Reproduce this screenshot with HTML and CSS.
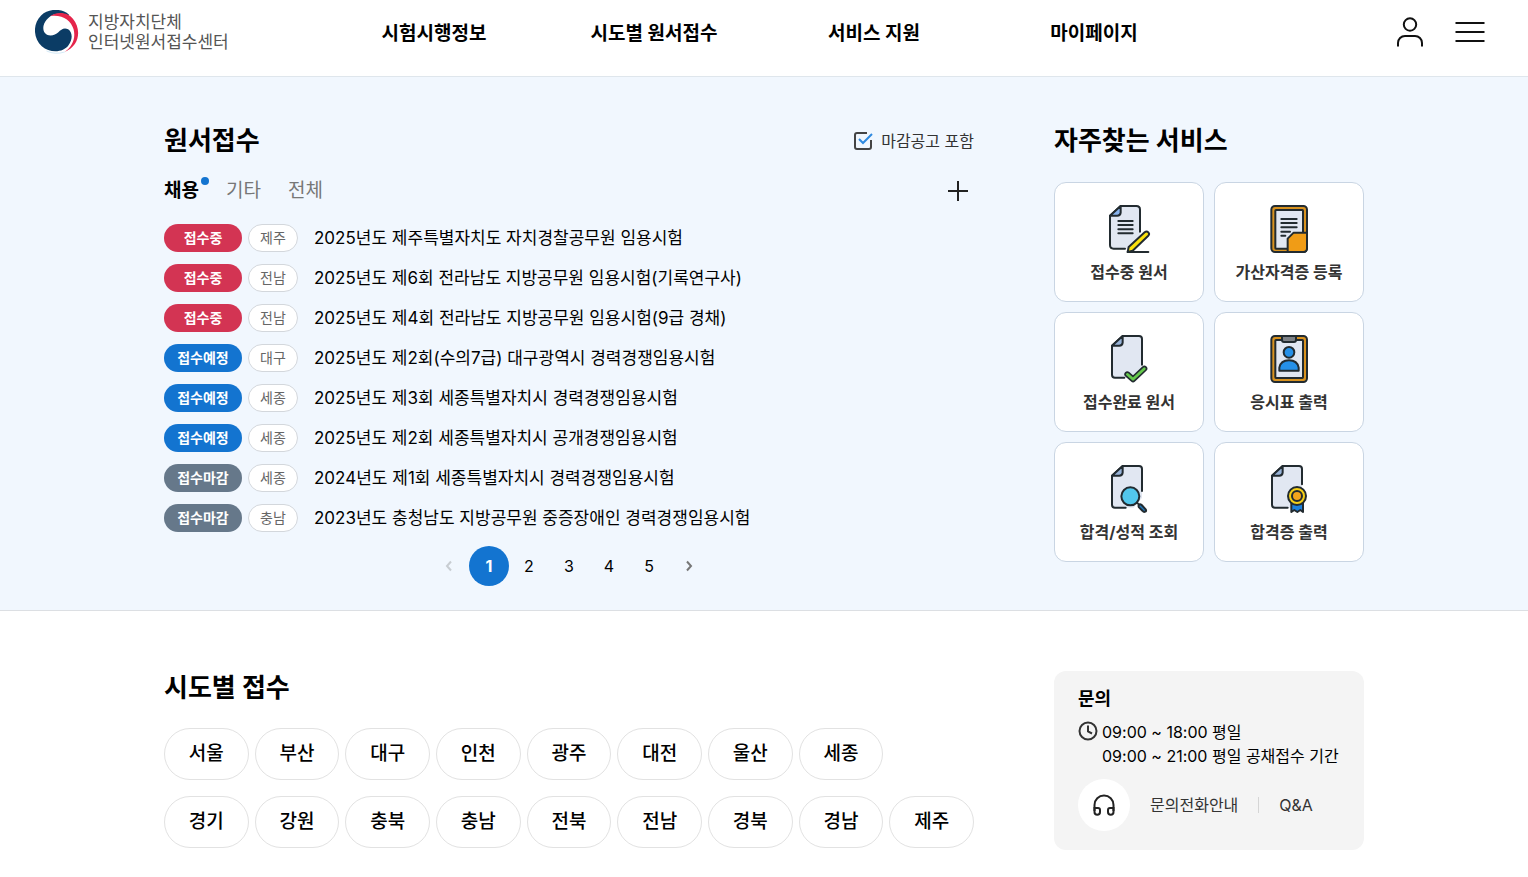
FILE: index.html
```html
<!DOCTYPE html>
<html lang="ko">
<head>
    <meta charset="UTF-8">
    <meta name="viewport" content="width=device-width, initial-scale=1.0">
    <title>지방자치단체 인터넷원서접수센터</title>
    <link rel="stylesheet" href="styles.css">
</head>
<body>
    <header class="header">
        <a class="logo" href="#">
            <svg class="logo-mark" viewBox="0 0 130 130" aria-hidden="true">
                <path fill="#0b3c65" d="M100 13C80 -5 40 -6 18 16C-8 42 -5 84 20 107C44 128 84 126 99 104C113 86 110 64 98 57C85 51 77 58 69 66C58 77 36 80 27 65C18 46 34 20 60 12C76 8 90 10 100 18Z"/>
                <path fill="#e5254b" d="M45 18C68 3 98 8 112 26C138 58 132 106 88 124C110 108 121 84 114 57C106 31 82 13 45 18Z"/>
                <path fill="none" stroke="#bfe0f3" stroke-width="2" d="M34 121Q60 133 88 124"/>
            </svg>
            <span class="logo-text">지방자치단체<br>인터넷원서접수센터</span>
        </a>
        <nav class="nav">
            <a href="#">시험시행정보</a>
            <a href="#">시도별 원서접수</a>
            <a href="#">서비스 지원</a>
            <a href="#">마이페이지</a>
        </nav>
        <div class="header-tools">
            <button type="button" aria-label="로그인">
                <svg width="32" height="32" viewBox="0 0 32 32" fill="none" stroke="#111" stroke-width="2">
                    <circle cx="16" cy="8.500" r="6.200"/>
                    <path d="M4 30.500V27a7 7 0 0 1 7-7h10a7 7 0 0 1 7 7v3.500"/>
                </svg>
            </button>
            <button type="button" aria-label="전체메뉴">
                <svg width="32" height="32" viewBox="0 0 32 32" stroke="#111" stroke-width="2">
                    <path d="M1.500 7h29M1.500 16h29M1.500 25h29"/>
                </svg>
            </button>
        </div>
    </header>

    <main>
        <section class="hero">
            <div class="container">
                <div class="notice">
                    <div class="title-row">
                        <h2>원서접수</h2>
                        <label class="check"><input type="checkbox" checked>마감공고 포함</label>
                    </div>
                    <div class="tabs">
                        <button type="button" class="tab active">채용</button>
                        <button type="button" class="tab">기타</button>
                        <button type="button" class="tab">전체</button>
                        <button type="button" class="more" aria-label="더보기">
                            <svg width="20" height="20" viewBox="0 0 20 20" stroke="#222" stroke-width="2"><path d="M10 0v20M0 10h20"/></svg>
                        </button>
                    </div>
                    <ul class="list">
                        <li><span class="badge ing">접수중</span><span class="area">제주</span><a href="#">2025년도 제주특별자치도 자치경찰공무원 임용시험</a></li>
                        <li><span class="badge ing">접수중</span><span class="area">전남</span><a href="#">2025년도 제6회 전라남도 지방공무원 임용시험(기록연구사)</a></li>
                        <li><span class="badge ing">접수중</span><span class="area">전남</span><a href="#">2025년도 제4회 전라남도 지방공무원 임용시험(9급 경채)</a></li>
                        <li><span class="badge soon">접수예정</span><span class="area">대구</span><a href="#">2025년도 제2회(수의7급) 대구광역시 경력경쟁임용시험</a></li>
                        <li><span class="badge soon">접수예정</span><span class="area">세종</span><a href="#">2025년도 제3회 세종특별자치시 경력경쟁임용시험</a></li>
                        <li><span class="badge soon">접수예정</span><span class="area">세종</span><a href="#">2025년도 제2회 세종특별자치시 공개경쟁임용시험</a></li>
                        <li><span class="badge end">접수마감</span><span class="area">세종</span><a href="#">2024년도 제1회 세종특별자치시 경력경쟁임용시험</a></li>
                        <li><span class="badge end">접수마감</span><span class="area">충남</span><a href="#">2023년도 충청남도 지방공무원 중증장애인 경력경쟁임용시험</a></li>
                    </ul>
                    <div class="paging">
                        <button type="button" aria-label="이전" disabled>
                            <svg width="12" height="12" viewBox="0 0 12 12" fill="none" stroke="#c8cdd2" stroke-width="2"><path d="M8 1.500L4 6l4 4.500"/></svg>
                        </button>
                        <button type="button" class="current">1</button>
                        <button type="button">2</button>
                        <button type="button">3</button>
                        <button type="button">4</button>
                        <button type="button">5</button>
                        <button type="button" aria-label="다음">
                            <svg width="12" height="12" viewBox="0 0 12 12" fill="none" stroke="#777" stroke-width="2"><path d="M4 1.500L8 6l-4 4.500"/></svg>
                        </button>
                    </div>
                </div>

                <div class="service">
                    <h2>자주찾는 서비스</h2>
                    <div class="cards">
                        <a class="card" href="#">
                            <svg class="icon" viewBox="0 0 144 144">
                                <path fill="#e1e7f2" stroke="none" d="M47 3H94q11 0 11 11V90L66 131H26q-11 0-11-11V32Z"/>
                                <path d="M105 80V14q0-11-11-11H47L15 32V120q0 11 11 11H60"/>
                                <path fill="#88b3ee" d="M47 3L15 32H37q9 0 10-9Z"/>
                                <path d="M40 48H83M40 60H83M40 73H83M40 85H83"/>
                                <path fill="#fbe10d" d="M119 82q6-5 11 0q5 5-1 11L83 137L68 141L71 126Z"/>
                                <path d="M68 141H130"/>
                            </svg>
                            <span>접수중 원서</span>
                        </a>
                        <a class="card" href="#">
                            <svg class="icon" viewBox="0 0 144 144">
                                <rect x="19" y="3" width="107" height="138" rx="11" fill="#d8921f"/>
                                <rect x="31" y="15" width="83" height="116" rx="2" fill="#e1e7f2"/>
                                <path d="M49 42H95M49 54H95M49 67H95M49 80H75M49 92H61"/>
                                <path fill="#f09c16" d="M68 139V101L86 83H126V130q0 11-11 11H68Z"/>
                            </svg>
                            <span>가산자격증 등록</span>
                        </a>
                        <a class="card" href="#">
                            <svg class="icon" viewBox="0 0 144 144">
                                <path fill="#e1e7f2" stroke="none" d="M53 3H102q9 0 9 9V98L86 128H30q-9 0-9-9V32Z"/>
                                <path d="M111 89V12q0-9-9-9H53L21 32V119q0 9 9 9H58"/>
                                <path fill="#98b3d8" d="M53 3L21 32H43q9 0 10-9Z"/>
                                <path stroke="#222b30" stroke-width="18" d="M67 118L84 133L118 101"/>
                                <path stroke="#65c94c" stroke-width="8" d="M67 118L84 133L118 101"/>
                            </svg>
                            <span>접수완료 원서</span>
                        </a>
                        <a class="card" href="#">
                            <svg class="icon" viewBox="0 0 144 144">
                                <rect x="19" y="3" width="107" height="138" rx="11" fill="#d8921f"/>
                                <rect x="31" y="15" width="83" height="114" rx="2" fill="#e1e7f2"/>
                                <path fill="#7d8186" d="M51 3H93V15q0 6-6 6H57q-6 0-6-6Z"/>
                                <circle cx="72" cy="52" r="16" fill="#2590e8"/>
                                <path fill="#2590e8" d="M43 107V98q4-22 29-22t29 22v9Z"/>
                            </svg>
                            <span>응시표 출력</span>
                        </a>
                        <a class="card" href="#">
                            <svg class="icon" viewBox="0 0 144 144">
                                <path fill="#e1e7f2" stroke="none" d="M53 3H102q9 0 9 9V98L86 128H30q-9 0-9-9V32Z"/>
                                <path d="M111 78V12q0-9-9-9H53L21 32V119q0 9 9 9H62"/>
                                <path fill="#98b3d8" d="M53 3L21 32H43q9 0 10-9Z"/>
                                <circle cx="76" cy="94" r="27" fill="#52c7ec"/>
                                <path d="M96 113L104 121"/>
                                <path fill="#2478b8" d="M101 121q3-6 9-1L122 133q3 5-1 7q-5 2-8-2L102 127q-2-3-1-6Z"/>
                            </svg>
                            <span>합격/성적 조회</span>
                        </a>
                        <a class="card" href="#">
                            <svg class="icon" viewBox="0 0 144 144">
                                <path fill="#e1e7f2" stroke="none" d="M53 3H102q9 0 9 9V98L86 128H30q-9 0-9-9V32Z"/>
                                <path d="M111 58V12q0-9-9-9H53L21 32V119q0 9 9 9H68"/>
                                <path fill="#98b3d8" d="M53 3L21 32H43q9 0 10-9Z"/>
                                <path fill="#1c80dc" d="M79 115V141L88 135L97 141L106 135L114 141V115Z"/>
                                <circle cx="96" cy="93" r="27" fill="#f5cf17"/>
                                <circle cx="96" cy="93" r="15" fill="#f5a51c"/>
                            </svg>
                            <span>합격증 출력</span>
                        </a>
                    </div>
                </div>
            </div>
        </section>

        <section class="region">
            <div class="container">
                <div class="notice">
                    <h2>시도별 접수</h2>
                    <div class="region-row">
                        <a href="#">서울</a>
                        <a href="#">부산</a>
                        <a href="#">대구</a>
                        <a href="#">인천</a>
                        <a href="#">광주</a>
                        <a href="#">대전</a>
                        <a href="#">울산</a>
                        <a href="#">세종</a>
                    </div>
                    <div class="region-row">
                        <a href="#">경기</a>
                        <a href="#">강원</a>
                        <a href="#">충북</a>
                        <a href="#">충남</a>
                        <a href="#">전북</a>
                        <a href="#">전남</a>
                        <a href="#">경북</a>
                        <a href="#">경남</a>
                        <a href="#">제주</a>
                    </div>
                </div>
                <aside class="contact">
                    <h3>문의</h3>
                    <div class="hours">
                        <svg width="20" height="24" viewBox="0 0 20 24" fill="none" stroke="#333" stroke-width="2">
                            <circle cx="10" cy="11" r="8.500"/>
                            <path d="M10 5.500V11.500L14 13.500"/>
                        </svg>
                        <p>09:00 ~ 18:00 평일<br>09:00 ~ 21:00 평일 공채접수 기간</p>
                    </div>
                    <div class="contact-links">
                        <span class="headset">
                            <svg width="22" height="22" viewBox="0 0 22 22" fill="none" stroke="#222" stroke-width="2">
                                <path d="M1.500 17V11a9.500 9.500 0 0 1 19 0V17"/>
                                <path d="M1.500 14H5a2 2 0 0 1 2 2V18a2.500 2.500 0 0 1-5.500 0ZM20.500 14H17a2 2 0 0 0-2 2V18a2.500 2.500 0 0 0 5.500 0Z"/>
                            </svg>
                        </span>
                        <a href="#">문의전화안내</a>
                        <a href="#">Q&amp;A</a>
                    </div>
                </aside>
            </div>
        </section>
    </main>
</body>
</html>
```
FILE: styles.css
```css
* {
    box-sizing: border-box;
    margin: 0;
    padding: 0;
}

body {
    font-family: Inter, "Noto Sans CJK KR", sans-serif;
    font-size: 16px;
    line-height: 24px;
    color: #000;
    background-color: #fff;
}

a {
    color: inherit;
    text-decoration: none;
}

ul {
    list-style: none;
}

button {
    font: inherit;
    color: inherit;
    background: none;
    border: 0;
    cursor: pointer;
}

svg {
    display: block;
}

h2 {
    font-size: 26px;
    line-height: 32px;
    font-weight: 700;
}

.container {
    display: grid;
    grid-template-columns: minmax(0, 1fr) 310px;
    gap: 80px;
    max-width: 1200px;
    margin: 0 auto;
}

/* header */
.header {
    display: grid;
    grid-template-columns: 1fr minmax(0, 880px) 1fr;
    align-items: center;
    padding: 10px 35px 22px;
    border-bottom: 1px solid #dfe6ec;
}

.logo {
    display: flex;
    align-items: center;
    gap: 9px;
    white-space: nowrap;
}

.logo-mark {
    width: 44px;
    height: 44px;
}

.logo-text {
    font-size: 17px;
    line-height: 20px;
    color: #555;
}

.nav {
    display: grid;
    grid-template-columns: repeat(4, 1fr);
    padding-top: 4px;
    text-align: center;
    font-size: 19px;
    font-weight: 700;
}

.header-tools {
    display: flex;
    justify-content: flex-end;
    gap: 28px;
    padding-right: 7px;
}

/* notice list */
.hero {
    padding: 48px 0 24px;
    background-color: #f1f7fe;
    border-bottom: 1px solid #dcdfe3;
}

.title-row {
    display: flex;
    justify-content: space-between;
    align-items: center;
}

.check {
    display: flex;
    align-items: center;
    gap: 8px;
    color: #333;
}

.check input {
    appearance: none;
    width: 20px;
    height: 20px;
    border: 0;
}

.check input:checked {
    background: url("data:image/svg+xml,%3Csvg xmlns='http://www.w3.org/2000/svg' viewBox='0 0 20 20' fill='none' stroke-width='2'%3E%3Cpath stroke='%23444' d='M14 2H4a2 2 0 0 0-2 2v12a2 2 0 0 0 2 2h12a2 2 0 0 0 2-2V9'/%3E%3Cpath stroke='%232f8ae0' d='M6 8l4 4 9-9'/%3E%3C/svg%3E");
}

.tabs {
    display: flex;
    align-items: center;
    gap: 27px;
    height: 36px;
    margin: 16px 0 9px;
}

.tab {
    position: relative;
    font-size: 19px;
    color: #777;
}

.tab.active {
    font-weight: 700;
    color: #000;
}

.tab.active::after {
    content: "";
    position: absolute;
    top: -2px;
    right: -10px;
    width: 8px;
    height: 8px;
    border-radius: 50%;
    background-color: #1374d0;
}

.more {
    margin-left: auto;
    padding: 6px;
}

.list li {
    display: flex;
    align-items: center;
    height: 40px;
    font-size: 17px;
}

.list a {
    margin-left: 16px;
}

.badge,
.area {
    height: 28px;
    border-radius: 14px;
    font-size: 14px;
    text-align: center;
}

.badge {
    width: 78px;
    margin-right: 6px;
    line-height: 28px;
    font-weight: 700;
    color: #fff;
}

.badge.ing {
    background-color: #d33453;
}

.badge.soon {
    background-color: #1374d0;
}

.badge.end {
    background-color: #66788a;
}

.area {
    width: 50px;
    line-height: 26px;
    color: #666;
    background-color: #fff;
    border: 1px solid #d3d7dc;
}

.paging {
    display: flex;
    justify-content: center;
    margin-top: 8px;
}

.paging button {
    display: flex;
    align-items: center;
    justify-content: center;
    width: 40px;
    height: 40px;
    border-radius: 50%;
}

.paging .current {
    font-weight: 700;
    color: #fff;
    background-color: #1374d0;
}

/* service cards */
.cards {
    display: grid;
    grid-template-columns: 1fr 1fr;
    gap: 10px;
    margin-top: 25px;
}

.card {
    display: flex;
    flex-direction: column;
    align-items: center;
    gap: 7px;
    height: 120px;
    padding-top: 22px;
    font-weight: 700;
    color: #333;
    background-color: #fff;
    border: 1px solid #c9d5e3;
    border-radius: 12px;
}

.icon {
    width: 48px;
    height: 48px;
    fill: none;
    stroke: #222b30;
    stroke-width: 6;
    stroke-linecap: round;
    stroke-linejoin: round;
}

/* regions */
.region {
    padding: 60px 0 27px;
}

.region h2 {
    padding-top: 1px;
    margin-bottom: 24px;
}

.region-row {
    display: grid;
    grid-template-columns: repeat(9, 1fr);
    gap: 6px;
    margin-bottom: 16px;
}

.region-row a {
    font-size: 19px;
    line-height: 50px;
    font-weight: 500;
    text-align: center;
    border: 1px solid #e2e2e2;
    border-radius: 26px;
}

.contact {
    align-self: start;
    padding: 16px 24px 19px;
    background-color: #f4f4f4;
    border-radius: 12px;
}

.contact h3 {
    font-size: 18px;
    line-height: 24px;
}

.hours {
    display: flex;
    gap: 4px;
    margin: 9px 0 11px;
    white-space: nowrap;
}

.contact-links {
    display: flex;
    align-items: center;
    color: #333;
}

.headset {
    display: flex;
    align-items: center;
    justify-content: center;
    width: 52px;
    height: 52px;
    border-radius: 50%;
    background-color: #fff;
}

.contact-links a {
    margin-left: 20px;
}

.contact-links a + a {
    padding-left: 20px;
    line-height: 16px;
    border-left: 1px solid #d5d5d5;
}
```
